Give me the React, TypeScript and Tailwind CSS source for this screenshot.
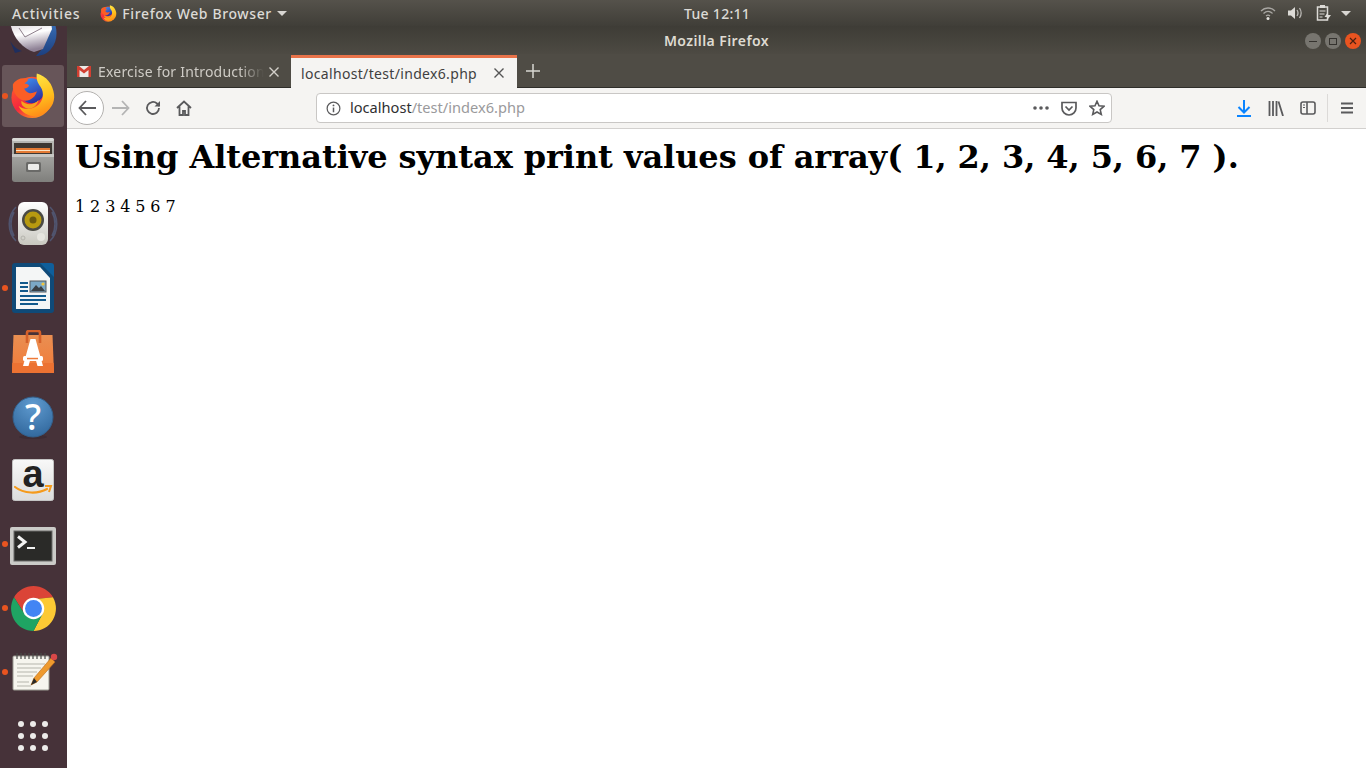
import React from 'react'

const UI_FONT = "font-['Noto_Sans',sans-serif]"

function FirefoxLogo({ size }: { size: number }) {
  const id = `ff${size}`
  return (
    <svg width={size} height={size} viewBox="0 0 48 48">
      <defs>
        <linearGradient id={`${id}a`} x1="0.2" y1="0.1" x2="0.7" y2="1">
          <stop offset="0" stopColor="#ff5a2c" />
          <stop offset="0.55" stopColor="#f3263f" />
          <stop offset="1" stopColor="#ff9a1e" />
        </linearGradient>
        <linearGradient id={`${id}b`} x1="0.2" y1="0" x2="0.7" y2="1">
          <stop offset="0" stopColor="#3f8fef" />
          <stop offset="1" stopColor="#2b2a9a" />
        </linearGradient>
        <linearGradient id={`${id}c`} x1="0.3" y1="0" x2="0.6" y2="1">
          <stop offset="0" stopColor="#ffe94a" />
          <stop offset="0.6" stopColor="#ffbf1c" />
          <stop offset="1" stopColor="#ff8a17" />
        </linearGradient>
      </defs>
      <circle cx="23" cy="25.500" r="21.500" fill={`url(#${id}a)`} />
      <circle cx="22.500" cy="18.500" r="13" fill={`url(#${id}b)`} />
      <path d="M28 0.500c-1 6 1 10 4 14 4 6 3 15-4 20-6 4-14 4-19 0 4 9 15 13 24 9 9-4 14-12 13-21C45 12 38 3 28 0.500z" fill={`url(#${id}c)`} />
      <path d="M8 7c4-2 8-2 11 0-1 2-3 3-4 4 2 0 4 1 5 2-1 2-3 3-5 3 0 2 3 5 6 5 3 0 5-1 7-2-1 5-6 10-12 10C10 29 2 21 3 12c1-2 3-4 5-5z" fill="#fb5e25" />
      <path d="M12 29c5 5 13 5 18-1-2 7-7 10-12 9-4-1-7-4-6-8z" fill="#f8a21d" />
    </svg>
  )
}

function ThunderbirdIcon() {
  return (
    <svg width="50" height="50" viewBox="0 0 50 50">
      <defs>
        <linearGradient id="tbEnv" x1="0" y1="0" x2="0.2" y2="1">
          <stop offset="0" stopColor="#c8bec6" />
          <stop offset="0.55" stopColor="#ffffff" />
          <stop offset="1" stopColor="#8f8296" />
        </linearGradient>
        <linearGradient id="tbWing" x1="0" y1="0" x2="0" y2="1">
          <stop offset="0" stopColor="#3f78c0" />
          <stop offset="1" stopColor="#1c3f7f" />
        </linearGradient>
      </defs>
      <path d="M42 8c8 8 9 24 1 33-4 5-10 7-15 7l7-8 8-18z" fill="url(#tbWing)" />
      <path d="M2 12c1 15 11 28 24 32l9-3 9-20-2-13z" fill="url(#tbEnv)" />
      <path d="M11 20l6 9 17-9" fill="none" stroke="#8d7f8b" strokeWidth="1" />
      <path d="M2 33c4 6 8 9 12 10l-7 2z" fill="#1f2f5f" />
    </svg>
  )
}

function FilesIcon() {
  return (
    <svg width="44" height="46" viewBox="0 0 44 46">
      <defs>
        <linearGradient id="fileBody" x1="0" y1="0" x2="0" y2="1">
          <stop offset="0" stopColor="#bcbcb9" />
          <stop offset="1" stopColor="#7f7f7c" />
        </linearGradient>
      </defs>
      <rect x="1" y="1" width="42" height="44" rx="3" fill="url(#fileBody)" />
      <rect x="1" y="1" width="42" height="3" rx="1.500" fill="#d8d8d5" />
      <rect x="3" y="6" width="38" height="11" fill="#3e3833" />
      <rect x="5" y="11" width="34" height="5" fill="#e47a34" />
      <rect x="5" y="13" width="34" height="1" fill="#fbe3c5" />
      <path d="M1 17h42v3H1z" fill="#c7c7c4" />
      <rect x="15" y="25" width="15" height="10" rx="1.500" fill="#6a6a68" />
      <rect x="17" y="27" width="11" height="6" rx="1" fill="#ececea" />
    </svg>
  )
}

function RhythmboxIcon() {
  return (
    <svg width="50" height="46" viewBox="0 0 50 46">
      <defs>
        <linearGradient id="spk" x1="0" y1="0" x2="0" y2="1">
          <stop offset="0" stopColor="#ffffff" />
          <stop offset="1" stopColor="#c9c8c0" />
        </linearGradient>
      </defs>
      <g fill="none" stroke="#5a76a4" strokeWidth="1.600" opacity="0.5">
        <path d="M8 6C-1 15-1 31 8 40M6 11C2 18 2 28 6 35M42 6c9 9 9 25 0 34M44 11c4 7 4 17 0 24" />
      </g>
      <rect x="10" y="1" width="30" height="43" rx="6" fill="url(#spk)" />
      <circle cx="25" cy="19" r="11" fill="#4a4a44" />
      <circle cx="25" cy="19" r="8.500" fill="#b79a10" />
      <circle cx="25" cy="19" r="3.500" fill="#6a5a10" />
      <circle cx="33" cy="36" r="4" fill="#e6e5df" />
      <circle cx="15" cy="37" r="2" fill="none" stroke="#b5b4ad" />
    </svg>
  )
}

function WriterIcon() {
  return (
    <svg width="42" height="50" viewBox="0 0 42 50">
      <path d="M3 0h27l12 12v35a3 3 0 0 1-3 3H3a3 3 0 0 1-3-3V3a3 3 0 0 1 3-3z" fill="#0f4a78" />
      <path d="M28 0h11a3 3 0 0 1 3 3v11z" fill="#0f5f9c" />
      <path d="M4 4h24l10 11v31H4z" fill="#f4f6f6" />
      <g fill="#135a8c">
        <rect x="8" y="19" width="8" height="2" />
        <rect x="8" y="23" width="8" height="2" />
        <rect x="8" y="27" width="8" height="2" />
        <rect x="8" y="32" width="26" height="2" />
        <rect x="8" y="36" width="26" height="2" />
        <rect x="8" y="40" width="18" height="2" />
      </g>
      <rect x="18" y="18" width="16" height="11" fill="#7ba8c6" stroke="#54585c" />
      <path d="M19 28l5-6 3 3 2-2 4 5z" fill="#3a3f44" />
      <circle cx="31" cy="21" r="1.600" fill="#f2c53d" />
    </svg>
  )
}

function SoftwareIcon() {
  return (
    <svg width="42" height="44" viewBox="0 0 42 44">
      <defs>
        <linearGradient id="bag" x1="0" y1="0" x2="0" y2="1">
          <stop offset="0" stopColor="#e98f52" />
          <stop offset="1" stopColor="#f27a38" />
        </linearGradient>
      </defs>
      <path d="M1.500 5h39l1.500 38H0z" fill="url(#bag)" />
      <path d="M0.300 33h41.400l0.300 10H0z" fill="#ec7232" />
      <path d="M15 13V3a2 2 0 0 1 2-2h9a2 2 0 0 1 2 2v10" fill="none" stroke="#d4602a" strokeWidth="2.600" />
      <path d="M18.500 9h5L31 36h-5.500l-1.400-5h-6.200L16.500 36H11z" fill="#ffffff" />
      <rect x="11" y="26" width="20" height="5" rx="1.500" fill="#ffffff" />
      <rect x="15" y="27.800" width="11" height="1.500" fill="#ef7a39" />
    </svg>
  )
}

function HelpIcon() {
  return (
    <svg className="mt-[4px]" width="42" height="44" viewBox="0 0 42 44">
      <defs>
        <radialGradient id="helpFill" cx="0.5" cy="0.2" r="0.9">
          <stop offset="0" stopColor="#5f9bd0" />
          <stop offset="1" stopColor="#2d6398" />
        </radialGradient>
      </defs>
      <ellipse cx="21" cy="41" rx="14" ry="2" fill="#3e2c33" />
      <circle cx="21" cy="21" r="20" fill="url(#helpFill)" stroke="#335f8a" />
      <text x="21" y="34" textAnchor="middle" fontSize="36" fontWeight="500" fill="#ffffff" fontFamily="'Noto Sans',sans-serif">?</text>
    </svg>
  )
}

function AmazonIcon() {
  return (
    <svg width="42" height="42" viewBox="0 0 42 42">
      <defs>
        <linearGradient id="amz" x1="0" y1="0" x2="0" y2="1">
          <stop offset="0" stopColor="#f8f8f8" />
          <stop offset="1" stopColor="#dcdcdc" />
        </linearGradient>
      </defs>
      <rect x="0.500" y="0.500" width="41" height="41" rx="2" fill="url(#amz)" stroke="#c4c4c4" />
      <text x="21" y="28" textAnchor="middle" fontSize="38" fontWeight="700" fill="#222222" fontFamily="'Liberation Sans',sans-serif">a</text>
      <path d="M3 28c9 7 23 7 32 2" fill="none" stroke="#f59a1c" strokeWidth="2.200" strokeLinecap="round" />
      <path d="M33 27l6 0-2 6" fill="none" stroke="#f59a1c" strokeWidth="2" />
    </svg>
  )
}

function TerminalIcon() {
  return (
    <svg className="mt-[4px]" width="46" height="38" viewBox="0 0 46 38">
      <rect x="0" y="0" width="46" height="38" rx="2" fill="#cbcbc8" />
      <rect x="4" y="4" width="38" height="30" fill="#2a2a28" stroke="#6a6a68" />
      <path d="M8 9.500l7 5.500-7 5.500" fill="none" stroke="#f2f2f2" strokeWidth="3" />
      <rect x="17" y="20" width="8" height="2" fill="#f2f2f2" />
    </svg>
  )
}

function ChromeIcon() {
  return (
    <svg width="49" height="49" viewBox="0 0 48 48">
      <path d="M43.050 13A22 22 0 0 0 4.950 13L15 29l9-14z" fill="#db4437" />
      <path d="M43.050 13A22 22 0 0 1 24 46l9-17-9-14z" fill="#fcc934" />
      <path d="M4.950 13A22 22 0 0 0 24 46l9-17H15z" fill="#1fa463" />
      <circle cx="24" cy="24" r="10.500" fill="#ffffff" />
      <circle cx="24" cy="24" r="8.300" fill="#4285f4" />
    </svg>
  )
}

function NotepadIcon() {
  return (
    <svg className="ml-[4px]" width="46" height="40" viewBox="0 0 46 40">
      <rect x="1" y="4" width="36" height="34" rx="1" fill="#f6f5ee" stroke="#9a9a92" />
      <g stroke="#4a4a48" strokeWidth="1.200">
        {[5, 9, 13, 17, 21, 25, 29, 33].map((x) => (
          <path key={x} d="M0 1v6" transform={`translate(${x} 0)`} />
        ))}
      </g>
      <g stroke="#b5b5ac" strokeWidth="1">
        <path d="M5 12h28M5 16h24M5 20h20M5 24h16M5 30h12M5 34h14" />
      </g>
      <path d="M19 33l3-7L39 6l4 4-18 20z" fill="#ee9a2e" stroke="#b86a18" strokeWidth="0.600" />
      <path d="M19 33l3-7 3 4z" fill="#2a2a28" />
      <circle cx="42" cy="5" r="3.200" fill="#d84848" />
    </svg>
  )
}

function AppsGrid() {
  return (
    <div className="grid grid-cols-3 gap-x-[6px] gap-y-[6px]">
      {[0, 1, 2, 3, 4, 5, 6, 7, 8].map((d) => (
        <span key={d} className="w-[6px] h-[6px] rounded-full bg-[#ecebe9]" />
      ))}
    </div>
  )
}

function DockSlot({ running, active, children }: { running?: boolean; active?: boolean; children: React.ReactNode }) {
  return (
    <div className="relative h-[64px] w-[66px] shrink-0 flex items-center justify-center">
      {active && <div className="absolute left-[2px] top-[1px] w-[62px] h-[62px] rounded-[3px] bg-[#675559]" />}
      {running && <span className="absolute left-[2px] top-[29px] w-[6px] h-[6px] rounded-full bg-[#e95420]" />}
      <div className="relative flex items-center justify-center">{children}</div>
    </div>
  )
}

function Dock() {
  return (
    <aside className="w-[67px] shrink-0 bg-[#463239] flex flex-col overflow-hidden">
      <div className="h-[38px] w-[66px] shrink-0 flex items-end justify-center overflow-hidden">
        <div className="mb-[6px] shrink-0">
          <ThunderbirdIcon />
        </div>
      </div>
      <DockSlot running active>
        <FirefoxLogo size={46} />
      </DockSlot>
      <DockSlot>
        <FilesIcon />
      </DockSlot>
      <DockSlot>
        <RhythmboxIcon />
      </DockSlot>
      <DockSlot running>
        <WriterIcon />
      </DockSlot>
      <DockSlot>
        <SoftwareIcon />
      </DockSlot>
      <DockSlot>
        <HelpIcon />
      </DockSlot>
      <DockSlot>
        <AmazonIcon />
      </DockSlot>
      <DockSlot running>
        <TerminalIcon />
      </DockSlot>
      <DockSlot running>
        <ChromeIcon />
      </DockSlot>
      <DockSlot running>
        <NotepadIcon />
      </DockSlot>
      <DockSlot>
        <AppsGrid />
      </DockSlot>
    </aside>
  )
}

function Caret() {
  return <span className="w-0 h-0 border-x-[5px] border-x-transparent border-t-[5px] border-t-[#d8d6d2]" />
}

function TopBar() {
  return (
    <header className={`relative z-10 h-[26px] shrink-0 flex items-center bg-gradient-to-b from-[#55524b] to-[#403e38] text-[#dcdad6] text-[14px] font-medium ${UI_FONT}`}>
      <div className="w-[684px] shrink-0 flex items-center pl-[12px]">
        <span className="tracking-[0.8px]">Activities</span>
        <span className="ml-[20px]">
          <FirefoxLogo size={17} />
        </span>
        <span className="ml-[5px] tracking-[0.62px]">Firefox Web Browser</span>
        <span className="ml-[5px] flex">
          <Caret />
        </span>
      </div>
      <span className="tracking-[0.3px]">Tue 12:11</span>
      <div className="ml-auto flex items-center pr-[15px]">
        <svg width="16" height="16" viewBox="0 0 16 16" fill="none" stroke="#a9a7a3" strokeWidth="1.300">
          <path d="M1 6c4-4 10-4 14 0M3.500 8.500c2.700-2.500 6.300-2.500 9 0M6 11c1.200-1 2.800-1 4 0" />
          <circle cx="8" cy="13.500" r="1.500" fill="#e6e4e0" stroke="none" />
        </svg>
        <svg className="ml-[11px]" width="16" height="16" viewBox="0 0 16 16" fill="none">
          <path d="M1 5.500h3L8 2v12L4 10.500H1z" fill="#dcdad6" />
          <path d="M10 5c1.200 1.800 1.200 4.200 0 6M12.500 3c2 3 2 7 0 10" stroke="#b9b7b3" strokeWidth="1.300" />
        </svg>
        <svg className="ml-[13px]" width="16" height="18" viewBox="0 0 16 18" fill="none">
          <path d="M1.500 3h10v13h-10z" stroke="#dcdad6" strokeWidth="1.500" />
          <rect x="4" y="1" width="5" height="3" fill="#dcdad6" />
          <path d="M3.500 7h6M3.500 10h5M3.500 13h3" stroke="#dcdad6" strokeWidth="1.200" />
          <path d="M12 8l-3.500 5h3l-1 4 4.500-6h-3z" fill="#dcdad6" />
        </svg>
        <span className="ml-[9px] flex">
          <Caret />
        </span>
      </div>
    </header>
  )
}

function WindowButton({ tone, children }: { tone: string; children: React.ReactNode }) {
  return <span className={`w-[16px] h-[16px] rounded-full flex items-center justify-center ${tone}`}>{children}</span>
}

function TitleBar() {
  return (
    <div className={`relative h-[28px] shrink-0 flex items-center justify-center text-[14px] font-semibold tracking-[0.42px] text-[#dfdbd2] bg-gradient-to-b from-[#3e3c36] to-[#4d4a43] ${UI_FONT}`}>
      <span>Mozilla Firefox</span>
      <div className="absolute right-[5px] top-[7px] flex gap-[4px]">
        <WindowButton tone="bg-[#77756f]">
          <span className="w-[8px] h-[1px] bg-[#35332f]" />
        </WindowButton>
        <WindowButton tone="bg-[#77756f]">
          <span className="w-[8px] h-[7px] border border-[#35332f]" />
        </WindowButton>
        <WindowButton tone="bg-[#e95420]">
          <svg width="8" height="8" viewBox="0 0 8 8" stroke="#4a2010" strokeWidth="1.200">
            <path d="M1 1l6 6M7 1L1 7" />
          </svg>
        </WindowButton>
      </div>
    </div>
  )
}

function CloseX({ color }: { color: string }) {
  return (
    <svg width="10" height="10" viewBox="0 0 10 10" stroke={color} strokeWidth="1.400">
      <path d="M0.500 0.500l9 9M9.500 0.500l-9 9" />
    </svg>
  )
}

function GmailIcon() {
  return (
    <svg width="14" height="12" viewBox="0 0 14 12">
      <rect x="0" y="0" width="14" height="11" fill="#ece9e6" />
      <path d="M0 0h2l5 4 5-4h2v11h-2.500V4L7 7.500 2.500 4v7H0z" fill="#d23f31" />
    </svg>
  )
}

function TabStrip() {
  return (
    <div className={`h-[34px] shrink-0 flex items-stretch bg-[#4f4c45] border-b border-[#2f2e2a] text-[14px] ${UI_FONT}`}>
      <div className="w-[224px] shrink-0 flex items-center pl-[10px] pr-[12px] pt-[2px] text-[#cfccc6]">
        <GmailIcon />
        <span className="ml-[7px] flex-1 min-w-0 tracking-[0.2px] whitespace-nowrap overflow-hidden [mask-image:linear-gradient(to_right,black_85%,transparent)]">Exercise for Introduction</span>
        <span className="ml-[5px] flex">
          <CloseX color="#d3d0ca" />
        </span>
      </div>
      <div className="w-[226px] mt-[1px] -mb-px shrink-0 flex items-center pl-[10px] pr-[13px] bg-[#f5f4f2] border-t-[3px] border-t-[#e9734a] text-[#3f3f3f]">
        <span className="flex-1 whitespace-nowrap tracking-[0.33px]">localhost/test/index6.php</span>
        <CloseX color="#555555" />
      </div>
      <div className="ml-[9px] flex items-center">
        <svg width="14" height="14" viewBox="0 0 14 14" stroke="#d8d6d1" strokeWidth="1.500">
          <path d="M7 0v14M0 7h14" />
        </svg>
      </div>
    </div>
  )
}

function Toolbar() {
  const ink = '#5a5a5c'
  return (
    <div className={`h-[41px] shrink-0 flex items-center bg-[#f5f4f2] border-b border-[#d2d0ce] ${UI_FONT}`}>
      <div className="ml-[3px] w-[34px] h-[34px] rounded-full bg-white border border-[#b3b1af] flex items-center justify-center">
        <svg width="18" height="16" viewBox="0 0 18 16" fill="none" stroke={ink} strokeWidth="1.800">
          <path d="M8 1L1.500 8 8 15M2 8h16" />
        </svg>
      </div>
      <svg className="ml-[8px]" width="18" height="16" viewBox="0 0 18 16" fill="none" stroke="#b4b4b4" strokeWidth="1.800">
        <path d="M10 1l6.500 7L10 15M16 8H0" />
      </svg>
      <svg className="ml-[15px]" width="16" height="16" viewBox="0 0 16 16" fill="none" stroke={ink} strokeWidth="1.800">
        <path d="M14 8a6 6 0 1 1-2-4.500L14.500 6" />
        <path d="M15 1v5.500H9.500" fill={ink} stroke="none" />
      </svg>
      <svg className="ml-[15px]" width="16" height="16" viewBox="0 0 16 16" fill="none" stroke={ink} strokeWidth="1.800">
        <path d="M1 8l7-6.500L15 8M3.500 6.500V15h3.500v-4h2v4h3.500V6.500" />
      </svg>
      <div className="ml-[124px] w-[796px] h-[30px] flex items-center bg-white border border-[#c9c7c5] rounded-[4px] text-[14.6px]">
        <svg className="ml-[9px]" width="15" height="15" viewBox="0 0 16 16" fill="none" stroke={ink} strokeWidth="1.300">
          <circle cx="8" cy="8" r="6.800" />
          <path d="M8 7v5" strokeWidth="1.600" />
          <circle cx="8" cy="4.700" r="1" fill={ink} stroke="none" />
        </svg>
        <span className="ml-[9px] text-[#2f2f31]">localhost</span>
        <span className="text-[#9a9a9c]">/test/index6.php</span>
        <div className="ml-auto flex items-center">
          <svg width="16" height="4" viewBox="0 0 16 4" fill={ink}>
            <circle cx="2" cy="2" r="1.800" />
            <circle cx="8" cy="2" r="1.800" />
            <circle cx="14" cy="2" r="1.800" />
          </svg>
          <svg className="ml-[12px]" width="16" height="15" viewBox="0 0 16 15" fill="none" stroke={ink} strokeWidth="1.700">
            <path d="M1 1.500h14V7a7 7 0 0 1-14 0z" />
            <path d="M4.500 5.500L8 9l3.500-3.500" />
          </svg>
          <svg className="ml-[12px] mr-[6px]" width="16" height="16" viewBox="0 0 16 16" fill="none" stroke={ink} strokeWidth="1.600">
            <path d="M8 1.300l2 4.500 4.900.5-3.700 3.300 1.100 4.800L8 12l-4.300 2.400 1.100-4.800L1.100 6.300 6 5.800z" />
          </svg>
        </div>
      </div>
      <svg className="ml-[125px]" width="14" height="17" viewBox="0 0 14 17" fill="none" stroke="#0a84ff" strokeWidth="2">
        <path d="M7 0v12M1.500 7L7 12.500 12.500 7M0 16h14" />
      </svg>
      <svg className="ml-[17px]" width="16" height="15" viewBox="0 0 16 15" fill="none" stroke={ink} strokeWidth="1.800">
        <path d="M1.500 0v15M5 0v15M8.500 0v15M10.500 0.500l4.500 14.500" />
      </svg>
      <svg className="ml-[16px]" width="16" height="14" viewBox="0 0 16 14" fill="none" stroke={ink} strokeWidth="1.600">
        <rect x="1" y="1" width="14" height="12" rx="2" />
        <path d="M7 1v12" />
        <path d="M3 4h2M3 6.500h2" strokeWidth="1.200" />
      </svg>
      <span className="ml-[11px] w-px h-[28px] bg-[#dcdad8]" />
      <svg className="ml-[13px]" width="12" height="12" viewBox="0 0 12 12" stroke={ink} strokeWidth="1.800">
        <path d="M0 1.500h12M0 6h12M0 10.500h12" />
      </svg>
    </div>
  )
}

export default function App() {
  return (
    <div className="w-[1366px] h-[768px] overflow-hidden flex flex-col bg-white">
      <TopBar />
      <div className="flex flex-1 min-h-0">
        <Dock />
        <div className="flex-1 min-w-0 flex flex-col">
          <TitleBar />
          <TabStrip />
          <Toolbar />
          <main className="flex-1 bg-white px-[8px] pt-[10px] text-black font-['DejaVu_Serif',serif]">
            <h1 className="text-[32px] leading-[37px] font-bold tracking-[-0.07px] whitespace-nowrap">Using Alternative syntax print values of array( 1, 2, 3, 4, 5, 6, 7 ).</h1>
            <p className="mt-[21px] text-[16px] leading-[19px] tracking-[-0.1px]">1 2 3 4 5 6 7</p>
          </main>
        </div>
      </div>
    </div>
  )
}
